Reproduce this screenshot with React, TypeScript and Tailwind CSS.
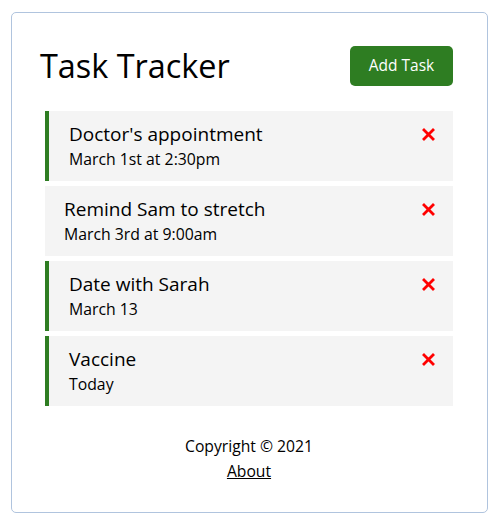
import React from "react";

type Task = { id: number; text: string; day: string; reminder: boolean };

const tasks: Task[] = [
  { id: 1, text: "Doctor's appointment", day: "March 1st at 2:30pm", reminder: true },
  { id: 2, text: "Remind Sam to stretch", day: "March 3rd at 9:00am", reminder: false },
  { id: 3, text: "Date with Sarah", day: "March 13", reminder: true },
  { id: 4, text: "Vaccine", day: "Today", reminder: true },
];

function XIcon() {
  return (
    <svg width="13" height="13" viewBox="0 0 13 13" className="shrink-0">
      <path d="M2 2 L11 11 M11 2 L2 11" stroke="#ff0000" strokeWidth="2.8" strokeLinecap="square" />
    </svg>
  );
}

export default function App() {
  return (
    <div
      className="bg-white min-h-[522px] pt-[12px] pl-[11px]"
      style={{ fontFamily: "'Open Sans', sans-serif" }}
    >
      <div className="w-[477px] h-[501px] border border-[#b0c4de] rounded-[5px] pl-[28px] pr-[29px] pt-[28px] text-black">
        <header className="flex items-start justify-between mb-[25px]">
          <h1 className="text-[32.4px] leading-[40px] mt-[4px]">Task Tracker</h1>
          <button className="bg-[#2e7d22] text-white text-[15.5px] font-medium rounded-[5px] w-[103px] h-[40px] mt-[5px] mr-[5px]">
            Add Task
          </button>
        </header>
        <div className="flex flex-col gap-[5px] mx-[5px]">
          {tasks.map((t) => (
            <div
              key={t.id}
              className={`bg-[#f4f4f4] h-[70px] flex justify-between pr-[18px] pt-[12px] ${
                t.reminder ? "border-l-[4px] border-[#2e7d22] pl-[20px]" : "pl-[19px]"
              }`}
            >
              <div>
                <div className="text-[19px] leading-[22px]">{t.text}</div>
                <div className="text-[15.8px] leading-[20px] mt-[4px]">{t.day}</div>
              </div>
              <div className="pt-[5px]">
                <XIcon />
              </div>
            </div>
          ))}
        </div>
        <footer className="text-center mt-[28px] text-[15.7px] leading-[25px]">
          <p>Copyright © 2021</p>
          <a href="#" className="underline">About</a>
        </footer>
      </div>
    </div>
  );
}
